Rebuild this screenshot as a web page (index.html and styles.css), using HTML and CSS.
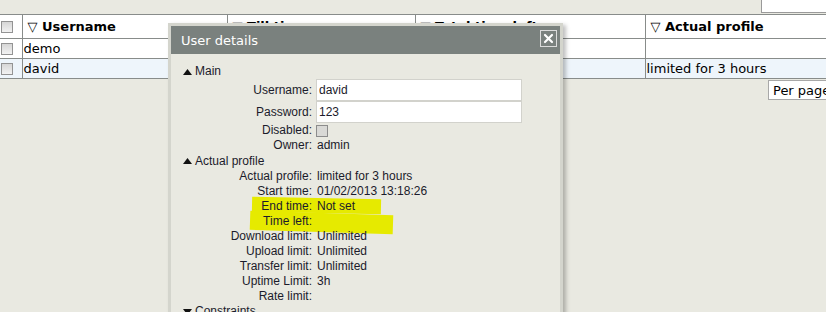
FILE: index.html
```html
<!DOCTYPE html>
<html lang="en">
<head>
    <meta charset="UTF-8">
    <title>Users</title>
    <link rel="stylesheet" href="styles.css">
</head>
<body>

    <div class="page">
        <div class="toolbar"><div class="search"></div></div>

        <table class="grid">
            <colgroup>
                <col class="c-chk">
                <col class="c-user">
                <col class="c-till">
                <col class="c-left">
                <col class="c-prof">
            </colgroup>
            <thead>
                <tr>
                    <th class="chk"><span class="cb"></span></th>
                    <th>&#9661; Username</th>
                    <th>&#9661; Till time</th>
                    <th>&#9661; Total time left</th>
                    <th>&#9661; Actual profile</th>
                </tr>
            </thead>
            <tbody>
                <tr>
                    <td class="chk"><span class="cb"></span></td>
                    <td>demo</td>
                    <td></td>
                    <td></td>
                    <td></td>
                </tr>
                <tr class="alt">
                    <td class="chk"><span class="cb"></span></td>
                    <td>david</td>
                    <td></td>
                    <td></td>
                    <td>limited for 3 hours</td>
                </tr>
            </tbody>
        </table>

        <div class="pager"><div class="perpage">Per page</div></div>
    </div>

    <div class="dialog">
        <div class="dialog-title">
            <span>User details</span>
            <button class="close" type="button">
                <svg width="11" height="11" viewBox="0 0 11 11"><path d="M2 2 L9 9 M9 2 L2 9" stroke="#fff" stroke-width="2.2" stroke-linecap="round"/></svg>
            </button>
        </div>

        <div class="dialog-body">
            <div class="group">
                <svg class="tri" width="9" height="6" viewBox="0 0 9 6"><polygon points="0,6 4.5,0 9,6"/></svg>Main
            </div>
            <div class="field tall">
                <label>Username:</label>
                <input class="text" type="text" value="david">
            </div>
            <div class="field tall">
                <label>Password:</label>
                <input class="text" type="text" value="123">
            </div>
            <div class="field">
                <label>Disabled:</label>
                <span class="box"></span>
            </div>
            <div class="field">
                <label>Owner:</label>
                <span class="val">admin</span>
            </div>

            <div class="group profile">
                <svg class="tri" width="9" height="6" viewBox="0 0 9 6"><polygon points="0,6 4.5,0 9,6"/></svg>Actual profile
            </div>
            <div class="field">
                <label>Actual profile:</label>
                <span class="val">limited for 3 hours</span>
            </div>
            <div class="field">
                <label>Start time:</label>
                <span class="val">01/02/2013 13:18:26</span>
            </div>
            <div class="field">
                <span class="mark mark-end"></span>
                <label>End time:</label>
                <span class="val">Not set</span>
            </div>
            <div class="field">
                <span class="mark mark-left"></span>
                <label>Time left:</label>
                <span class="val"></span>
            </div>
            <div class="field">
                <label>Download limit:</label>
                <span class="val">Unlimited</span>
            </div>
            <div class="field">
                <label>Upload limit:</label>
                <span class="val">Unlimited</span>
            </div>
            <div class="field">
                <label>Transfer limit:</label>
                <span class="val">Unlimited</span>
            </div>
            <div class="field">
                <label>Uptime Limit:</label>
                <span class="val">3h</span>
            </div>
            <div class="field">
                <label>Rate limit:</label>
                <span class="val"></span>
            </div>

            <div class="group">
                <svg class="tri" width="9" height="6" viewBox="0 0 9 6"><polygon points="0,0 9,0 4.5,6"/></svg>Constraints
            </div>
        </div>
    </div>

</body>
</html>
```

FILE: styles.css
```css
html, body {
    margin: 0;
    padding: 0;
    overflow: hidden;
}
body {
    width: 826px;
    height: 312px;
    background-color: #e9e9e1;
    font-family: "DejaVu Sans", Verdana, sans-serif;
    font-size: 13px;
    color: #000;
}
.page {
    width: 900px;
}
.toolbar {
    height: 14px;
    display: flex;
    justify-content: flex-end;
}
.search {
    width: 137px;
    height: 12px;
    background-color: #fff;
    border: 1px solid #9a9a9a;
    border-top: none;
}

/* grid */
.grid {
    width: 900px;
    border-collapse: collapse;
    table-layout: fixed;
    background-color: #fff;
}
.c-chk { width: 22px; }
.c-user { width: 205px; }
.c-till { width: 188px; }
.c-left { width: 230px; }
.c-prof { width: 255px; }
.grid th,
.grid td {
    border: 1px solid #888c8a;
    padding: 0 0 0 1px;
    text-align: left;
    white-space: nowrap;
    overflow: hidden;
    font-weight: normal;
}
.grid th {
    height: 23px;
    font-weight: bold;
    padding-left: 5px;
}
.grid td {
    height: 19px;
}
.grid .chk {
    border-left: none;
    padding: 0 0 0 1px;
}
.grid tr.alt td {
    background-color: #eef5fb;
}
.cb {
    display: block;
    width: 10px;
    height: 10px;
    border: 1px solid #939393;
    background: linear-gradient(#d6d6d6, #f2f2f2);
}
.pager {
    display: flex;
    justify-content: flex-end;
    padding-top: 1px;
}
.perpage {
    width: 132px;
    height: 20px;
    box-sizing: border-box;
    border: 1px solid #a8a8a8;
    background-color: #fff;
    padding-left: 4px;
    line-height: 19px;
}

/* dialog */
.dialog {
    position: absolute;
    left: 168px;
    top: 23px;
    width: 389px;
    height: 300px;
    border: 3px solid #d4d5cd;
    border-bottom: none;
    background-color: #e9e9e1;
    box-shadow: 3px 2px 4px rgba(0, 0, 0, 0.25);
    font-family: "Liberation Sans", Arial, sans-serif;
    font-size: 12px;
    color: #1b1b2b;
}
.dialog-title {
    height: 28px;
    background-color: #7a817e;
    color: #fff;
    display: flex;
    align-items: center;
    justify-content: space-between;
    padding: 0 3px 0 10px;
    font-family: "DejaVu Sans", Verdana, sans-serif;
    font-size: 13px;
}
.close {
    width: 17px;
    height: 17px;
    margin-top: -3px;
    padding: 0;
    border: 1px solid #dcdcdc;
    background: transparent;
    display: flex;
    align-items: center;
    justify-content: center;
}
.dialog-body {
    padding-top: 10px;
}
.group {
    height: 15px;
    line-height: 15px;
    padding-left: 12px;
    display: flex;
    align-items: center;
    gap: 3px;
}
.group.profile {
    height: 16px;
}
.tri {
    fill: #111;
}
.field {
    position: relative;
    display: grid;
    grid-template-columns: 141px 1fr;
    column-gap: 4px;
    height: 15px;
    line-height: 15px;
    align-items: center;
}
.field label {
    position: relative;
    text-align: right;
}
.field .val {
    position: relative;
    padding-left: 1px;
}
.field.tall {
    height: 22px;
}
.text {
    width: 206px;
    height: 22px;
    box-sizing: border-box;
    margin: 0;
    padding: 0 2px;
    border: 1px solid #d2d2cc;
    background-color: #fff;
    font-family: "Liberation Sans", Arial, sans-serif;
    font-size: 12px;
    color: #1b1b2b;
}
.box {
    width: 10px;
    height: 10px;
    border: 1px solid #8c8c8c;
    background-color: #d9d9d6;
}
.mark {
    position: absolute;
    top: -1px;
    height: 15px;
    background-color: #e6ea00;
}
.mark-end {
    left: 81px;
    width: 129px;
    transform: rotate(1.2deg);
}
.mark-left {
    left: 79px;
    width: 143px;
    height: 19px;
    transform: rotate(1.8deg);
}
```
